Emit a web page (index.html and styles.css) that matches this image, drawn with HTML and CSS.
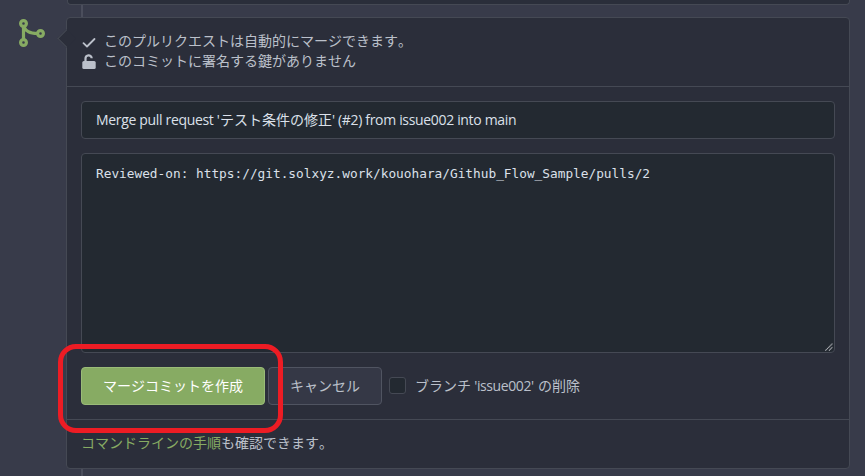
FILE: index.html
```
<!DOCTYPE html>
<html lang="ja">
<head>
<meta charset="utf-8">
<title>Merge pull request</title>
<link rel="stylesheet" href="styles.css">
</head>
<body>
<main class="timeline">
  <div class="previous"></div>
  <svg class="merge-icon" viewBox="0 0 28 30" fill="none" stroke="#87ab63" stroke-width="3.2">
    <circle cx="5.5" cy="5.5" r="2.900"/><circle cx="5.5" cy="24.500" r="2.900"/><circle cx="22.500" cy="15.500" r="2.900"/>
    <path d="M5.500 8V22M5.500 8.500C8 13 11 15.500 19.500 15.500"/>
  </svg>
  <section class="card">
    <div class="status">
      <div class="status-row">
        <svg class="icon" viewBox="0 0 16 16" fill="none" stroke="#bbc0ca" stroke-width="1.8" stroke-linecap="round" stroke-linejoin="round"><path d="M2.500 9.200L6 12.500L13.500 5"/></svg>
        <span>このプルリクエストは自動的にマージできます。</span>
      </div>
      <div class="status-row">
        <svg class="icon" viewBox="0 0 16 16"><path d="M4.500 8V4.600A3.100 3.100 0 0 1 10.700 4.200" fill="none" stroke="#bbc0ca" stroke-width="2.2"/><rect x="1.300" y="7" width="13.400" height="8" rx="1.500" fill="#bbc0ca"/></svg>
        <span>このコミットに署名する鍵がありません</span>
      </div>
    </div>
    <form class="merge-form">
      <div class="field title-field"><span class="lat-a">Merge pull request '</span>テスト条件の修正<span class="lat-b">' (#2) from issue002 into main</span></div>
      <div class="field message-field">Reviewed-on: https://git.solxyz.work/kouohara/Github_Flow_Sample/pulls/2
        <svg class="grip" viewBox="0 0 9 9" stroke="#c4c6ca" stroke-width="1.2" stroke-dasharray="1 .4"><path d="M.5 8.500L8.500 .5M4.500 8.500L8.500 4.500"/></svg>
      </div>
      <div class="actions">
        <button type="button" class="button primary">マージコミットを作成</button>
        <button type="button" class="button cancel">キャンセル</button>
        <span class="checkbox"></span>
        <span class="delete-label">ブランチ<span class="lat-c"> 'issue002' </span>の削除</span>
      </div>
    </form>
    <div class="instructions"><span class="link">コマンドラインの手順</span>も確認できます。</div>
  </section>
  <div class="highlight"></div>
</main>
</body>
</html>
```
FILE: styles.css
```
* { box-sizing: border-box; }
body {
  margin: 0;
  background: #383b4a;
  color: #bbc0ca;
  font: 14px/20px "Open Sans", "Noto Sans CJK JP", sans-serif;
  font-kerning: none;
}
.timeline {
  position: relative;
  height: 476px;
  padding-left: 66px;
  overflow: hidden;
}
.timeline::before {
  content: "";
  position: absolute;
  left: 81px;
  top: 0;
  bottom: 0;
  width: 2px;
  background: #4b4e5c;
}
.previous {
  position: relative;
  width: 783px;
  height: 5px;
  margin-left: 1px;
  margin-bottom: 12px;
  background: #2a2e3a;
  border: 1px solid #454954;
  border-top: 0;
  border-radius: 0 0 4px 4px;
}
.merge-icon {
  position: absolute;
  left: 18px;
  top: 18px;
  width: 28px;
  height: 30px;
}
.card {
  position: relative;
  width: 784px;
  height: 452px;
  background: #2b2e3a;
  border: 1px solid #454954;
  border-radius: 4px;
}
.card::before {
  content: "";
  position: absolute;
  left: -7px;
  top: 14px;
  width: 12px;
  height: 12px;
  background: #2b2e3a;
  border: solid #454954;
  border-width: 0 0 1px 1px;
  transform: rotate(45deg);
}
.status {
  height: 69px;
  padding: 14px;
  border-bottom: 1px solid #454954;
}
.status-row {
  display: flex;
  align-items: center;
  gap: 8px;
  height: 20px;
}
.status-row span {
  margin: -2px 0 0 -1px;
}
.icon { width: 16px; height: 16px; flex: none; }
.merge-form {
  height: 333px;
  padding: 14px;
  border-bottom: 1px solid #454954;
}
.field {
  background: #232931;
  border: 1px solid #454954;
  border-radius: 4px;
  color: #dbe0ea;
  width: 754px;
  white-space: nowrap;
}
.title-field {
  height: 38px;
  padding: 8px 14px;
  margin-bottom: 14px;
}
.message-field {
  position: relative;
  height: 200px;
  padding: 10px 14px;
  font: 12.79px/20px "DejaVu Sans Mono", monospace;
}
.grip {
  position: absolute;
  right: 1px;
  bottom: 1px;
  width: 8px;
  height: 8px;
}
.actions {
  display: flex;
  align-items: center;
  margin-top: 14px;
}
.button {
  height: 38px;
  padding: 0 0 1px;
  border-radius: 4px;
  font: inherit;
}
.primary {
  width: 184px;
  margin-right: 3px;
  background: #87ab63;
  border: 1px solid #9abb78;
  color: #fff;
}
.cancel {
  width: 114px;
  background: #353846;
  border: 1px solid #505461;
  color: #bbc0ca;
}
.checkbox {
  width: 17px;
  height: 17px;
  margin: 0 9px 1px 7px;
  background: #232931;
  border: 1px solid #454954;
  border-radius: 3px;
}
.delete-label { white-space: nowrap; }
.lat-a, .lat-b, .lat-c {
  display: inline-block;
  white-space: pre;
}
.lat-a { width: 124px; letter-spacing: -.33px; }
.lat-b { letter-spacing: -.33px; }
.lat-c { width: 67px; letter-spacing: -.4px; }
.instructions { padding: 13px 14px; }
.link { color: #87ab63; }
.highlight {
  position: absolute;
  left: 58px;
  top: 344px;
  width: 225px;
  height: 89px;
  border: 5px solid #ed1c24;
  border-radius: 18px;
}
```
